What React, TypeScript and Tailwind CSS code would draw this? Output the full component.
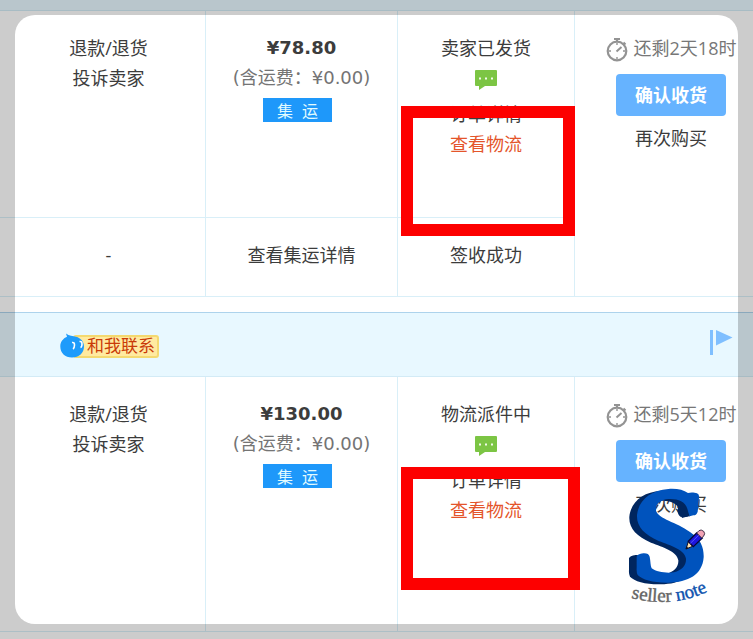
type Order = {
	id: string;
	price: string;
	shipping: string;
	status: string;
	timeLeft: string;
};

const orders: Order[] = [
	{ id: 'first', price: '¥78.80', shipping: '¥0.00', status: '卖家已发货', timeLeft: '还剩2天18时' },
	{ id: 'second', price: '¥130.00', shipping: '¥0.00', status: '物流派件中', timeLeft: '还剩5天12时' },
];

const cell = 'border-[#d9eff8] p-0 pt-[22px] align-top';

function Stopwatch() {
	return (
		<svg width="22" height="26" viewBox="0 0 22 26" fill="none" stroke="#939393" className="mt-1 shrink-0">
			<circle cx="11" cy="14" r="9.3" strokeWidth="2.2" />
			<path d="M8 2h6M11 2v3M17.5 5.5l2 2" strokeWidth="2" />
			<path d="M10.5 14.5l5-4.5" strokeWidth="2" />
			<path d="M3 14h2M17 14h2M11 6v2M11 20v2" strokeWidth="1.4" />
		</svg>
	);
}

function ChatIcon() {
	return (
		<svg width="22" height="20" viewBox="0 0 22 20">
			<path d="M1 0h20a1 1 0 0 1 1 1v14a1 1 0 0 1-1 1H10l-6 4v-4H1a1 1 0 0 1-1-1V1a1 1 0 0 1 1-1z" fill="#7cc544" />
			<path d="M4 7.5h2v2H4zM10 7.5h2v2h-2zM16 7.5h2v2h-2z" fill="#f1fae9" />
		</svg>
	);
}

function ContactButton() {
	return (
		<button className="flex h-[26px] items-center text-[17px] text-[#c93a08]">
			<svg width="25" height="26" viewBox="0 0 25 26" className="relative z-10 shrink-0">
				<path d="M6 0.500C9 3 13 3 16 3.800C21 5 24 9 24 13.500C24 20 19 24.500 12 24.500S0.300 20 0.300 13.500C0.300 9 3 5.500 7 3.800z" fill="#1e9bfb" />
				<path d="M12 9.500q2.500-0.500 2.500 2.500t-1.500 4M19.500 8.500q2.500-0.500 2.500 2.500t-1.500 3.500" fill="none" stroke="#fff" strokeWidth="1.600" />
			</svg>
			<span className="-ml-3 flex h-[23px] items-center rounded-[3px] border-2 border-[#f4d970] bg-[#ffeaa0] pr-[2px] pl-3">和我联系</span>
		</button>
	);
}

function Flag() {
	return (
		<svg width="23" height="26" viewBox="0 0 23 26" fill="#7fbfff">
			<path d="M0 0h3v25H0zM6 0l16.500 7.500L6 15.500z" />
		</svg>
	);
}

function SellerNoteLogo() {
	// the same outline is drawn twice, the dark one shifted to give the letter its depth
	const letter = 'M264 69C272 66 284 67 291 70Q299 73 297 84L293 125Q290 136 280 136L269 139Q265 128 262 116C255 94 234 86 206 87C181 88 166 103 168 122C177 148 228 155 270 186C304 208 312 235 311 262C307 315 265 337 205 338C162 339 126 329 113 315Q109 308 110 294L110 260Q112 252 130 250Q146 249 149 260C152 275 151 287 155 295C170 306 198 310 222 307C246 300 259 286 258 266C254 239 213 227 176 213C133 194 109 170 111 135C116 89 153 61 205 57C231 55 250 60 264 69Z';
	return (
		<svg width="100" height="130" viewBox="0 0 100 130" className="pointer-events-none">
			<g transform="translate(-20 -10) scale(0.333333)">
				<path d={letter} fill="#00265f" transform="translate(-23 5)" />
				<path d="M240 90L232 122Q236 141 246 141L270 139L262 100z" fill="#00265f" />
				<path d={letter} fill="#0053bd" />
				<path d="M258 237l7-22 13 14z" fill="#ffe0b0" stroke="#101020" strokeWidth="3" />
				<path d="M265 214l25-25 17 15-27 26z" fill="#1d16e0" stroke="#08083c" strokeWidth="4" />
				<path d="M271 220l27-26" stroke="#5a56ff" strokeWidth="3" />
				<path d="M290 189l7-7q6-5 14 2 6 7 0 14l-6 6z" fill="#f3a3b5" stroke="#40304a" strokeWidth="3" />
				<path d="M257 238l3-9 5 6z" fill="#101020" />
			</g>
			<path id="tagline" d="M11 118Q56 129 93 109" fill="none" />
			<text fontSize="19" strokeWidth="0.400" className="[font-family:'Liberation_Serif',serif]">
				<textPath href="#tagline">
					<tspan fill="#666" stroke="#666">seller </tspan>
					<tspan fill="#0d52ae" stroke="#0d52ae">note</tspan>
				</textPath>
			</text>
		</svg>
	);
}

function OrderHead() {
	return (
		<div className="mt-[15px] flex items-start justify-between border-t border-b border-t-[#add3ec] border-b-[#d3ebf6] bg-[#e8f8ff] pt-[17px] pr-5 pb-[17px] pl-[60px]">
			<div className="pt-[3px]"><ContactButton /></div>
			<button aria-label="flag"><Flag /></button>
		</div>
	);
}

function OrderTable({ order, last }: { order: Order, last: boolean }) {
	return (
		<table className="w-full table-fixed border-separate border-spacing-0 text-center">
			<colgroup>
				<col className="w-[206px]" />
				<col className="w-[192px]" />
				<col className="w-[177px]" />
				<col />
			</colgroup>
			<tbody>
				<tr className={last ? 'h-[255px]' : 'h-[207px]'}>
					<td className={`${cell} border-r border-b pl-3`}>
						<a href="#refund" className="block">退款/退货</a>
						<a href="#complain" className="block">投诉卖家</a>
					</td>
					<td className={`${cell} border-r border-b [font-family:'DejaVu_Sans','Noto_Sans_CJK_SC',sans-serif]`}>
						<p className="font-bold">{order.price}</p>
						<p className="text-[#747474]">(含运费：{order.shipping})</p>
						<div className="mt-[5px] flex justify-center pr-2">
							<span className="flex h-6 items-center gap-[9px] bg-[#1e98fa] px-[14px] text-[16px] leading-6 text-[#e2fbff] [font-family:'Noto_Sans_CJK_SC',sans-serif]">
								<span>集</span>
								<span>运</span>
							</span>
						</div>
					</td>
					<td className={`${cell} relative border-r border-b`}>
						<p>{order.status}</p>
						<button aria-label="message" className="mx-auto mt-[7px] mb-[9px] block"><ChatIcon /></button>
						<a href="#detail" className="block">订单详情</a>
						<a href="#logistics" className="block text-[#e4552b]">查看物流</a>
						{last ?
							<div className="pointer-events-none absolute top-[90px] left-[3px] z-10 h-[123px] w-[179px] border-[12px] border-[#fd0000]" />
						:
							<div className="pointer-events-none absolute top-[95px] left-[3px] z-10 h-[130px] w-[174px] border-[12px] border-[#fd0000]" />
						}
					</td>
					<td rowSpan={last ? 1 : 2} className={`${cell} relative border-b pl-[14px]`}>
						<div className="flex h-[30px] items-center justify-center gap-[6px] whitespace-nowrap text-[#777]">
							<Stopwatch />
							{order.timeLeft}
						</div>
						<button className="mt-[11px] h-[42px] rounded bg-[#66b3ff] px-[19px] font-bold text-white">确认收货</button>
						<a href="#again" className="mt-[7px] block">再次购买</a>
						{last && <div className="absolute top-[103px] left-[45px]"><SellerNoteLogo /></div>}
					</td>
				</tr>
				{!last &&
					<tr className="h-[79px]">
						<td className={`${cell} border-r border-b pl-3`}>-</td>
						<td className={`${cell} border-r border-b`}><a href="#consolidation">查看集运详情</a></td>
						<td className={`${cell} border-r border-b`}>签收成功</td>
					</tr>
				}
			</tbody>
		</table>
	);
}

export default function App() {
	return (
		<main className="relative min-h-screen overflow-hidden bg-white text-[18px] leading-[30px] text-[#3c3c3c] [font-family:'Open_Sans','Noto_Sans_CJK_SC',sans-serif]">
			<div className="h-[11px] border-b border-[#d3ebf6] bg-[#e8f8ff]" />
			{orders.map((order, index) => (
				<section key={order.id}>
					{index > 0 && <OrderHead />}
					<OrderTable order={order} last={index === orders.length - 1} />
				</section>
			))}
			{/* shaded frame around the rounded view */}
			<div className="pointer-events-none absolute inset-[15px] z-20 rounded-[20px] shadow-[0_0_0_40px_rgba(0,0,0,0.2)]" />
		</main>
	);
}
